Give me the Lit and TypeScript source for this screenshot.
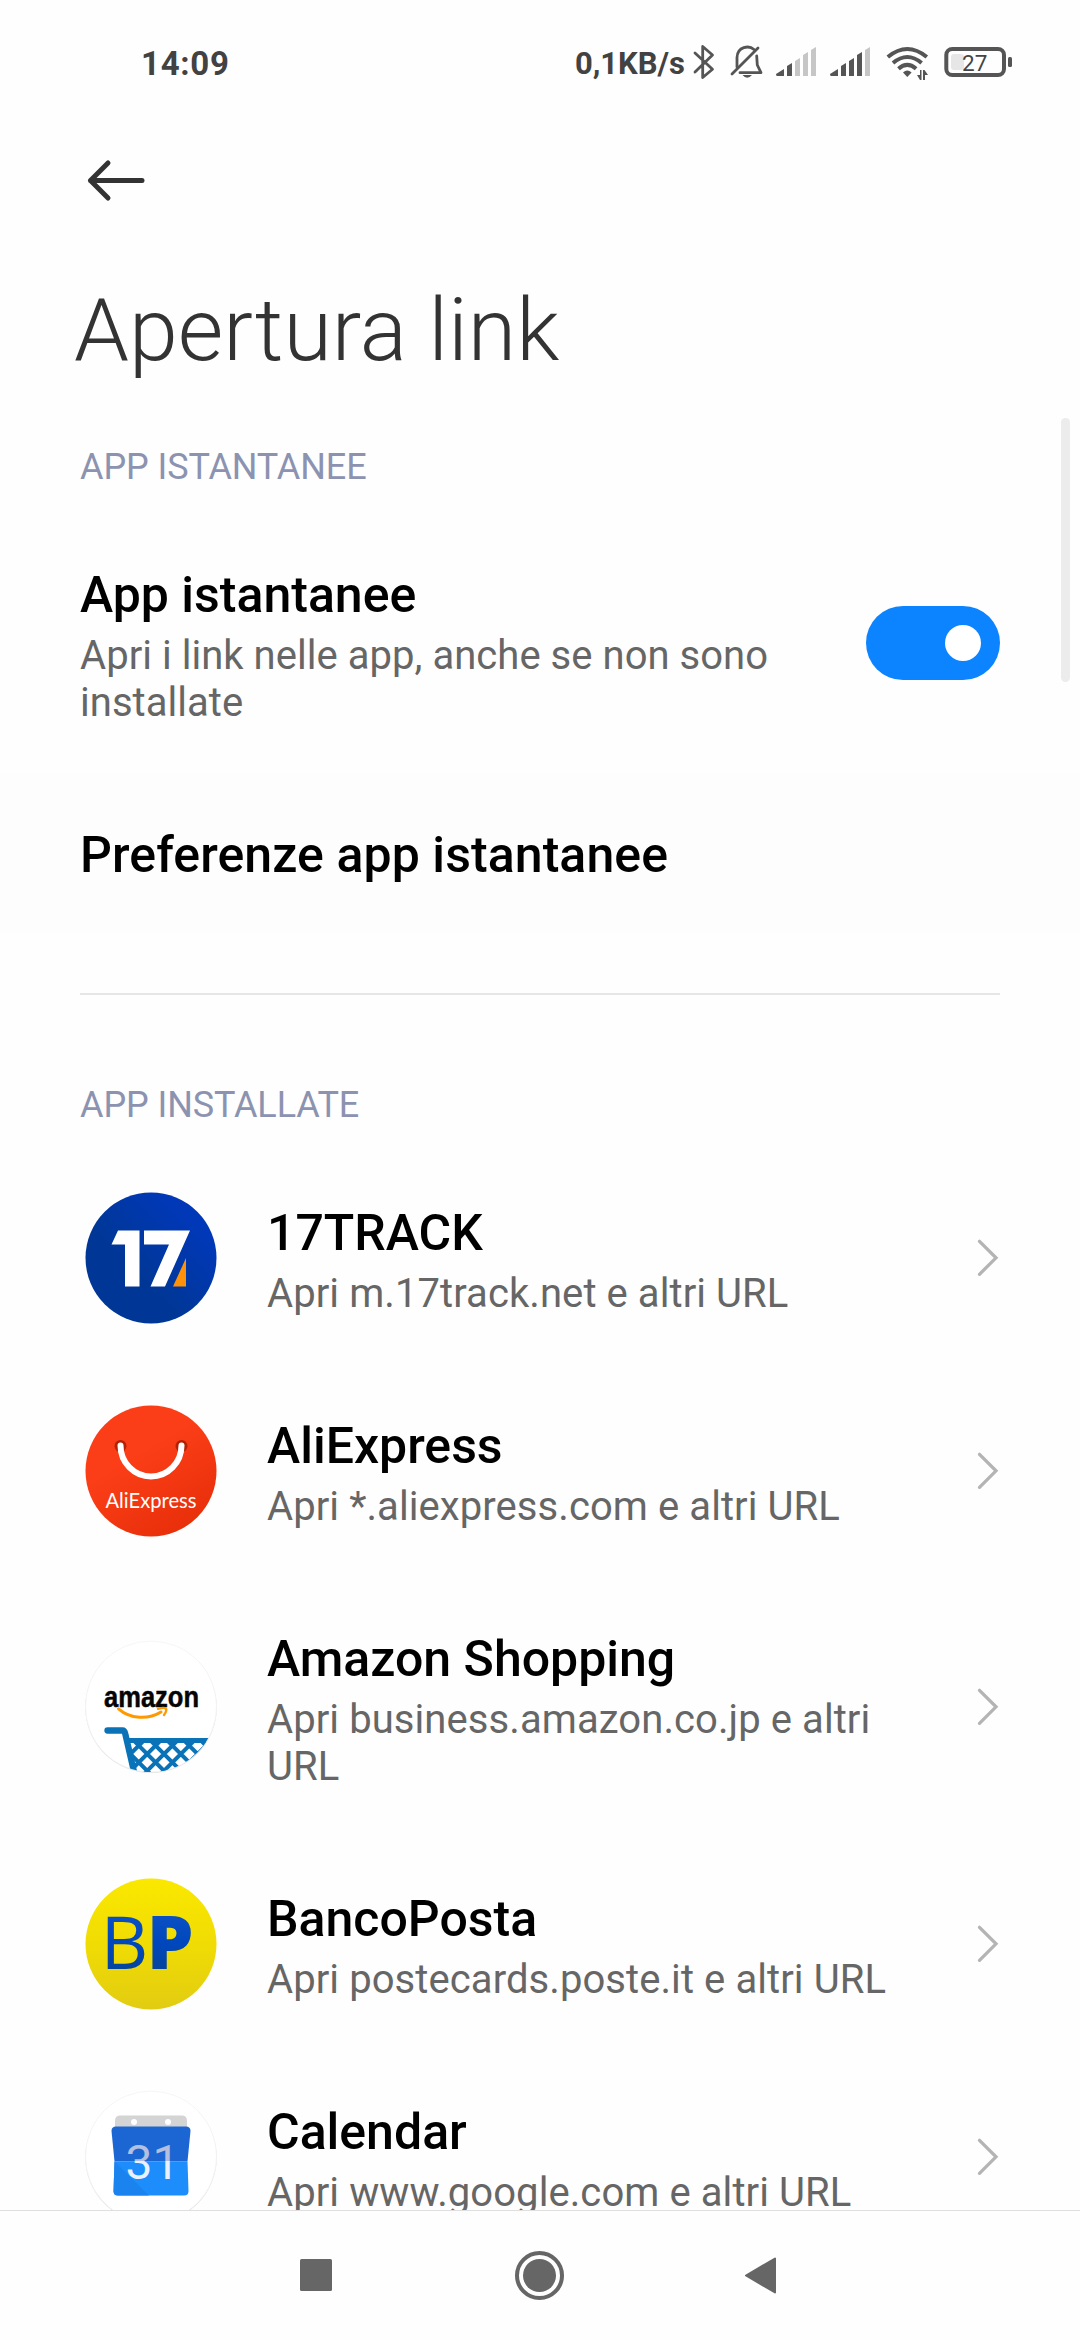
import { LitElement, html, svg, css } from "lit";
import { customElement } from "lit/decorators.js";

const bar = (x: number, top: number, on: boolean) =>
  svg`<path d="M${x} ${top + 3}L${x + 5} ${top}V29H${x}Z" fill=${on ? "#555" : "#c6c6c6"}></path>`;

const signal = (level: number) => html`<svg class="signal" width="41" height="30" viewBox="0 0 41 30">
  <path d="M1 29Q0 29 0 27L8 22V29Z" fill="#555"></path>
  ${[16, 11, 5, 0].map((top, i) => bar([11, 19, 27, 35][i], top, i + 2 <= level))}
</svg>`;

const chevron = html`<svg class="chevron" width="24" height="40" viewBox="0 0 24 40">
  <path d="M3.500 3.300L20 19.800L3.500 36.300" fill="none" stroke="#b4b4b4" stroke-width="3.300" stroke-linecap="round"></path>
</svg>`;

const icon17 = html`<svg class="icon" viewBox="0 0 132 132">
  <defs><linearGradient id="track-bg" x1=".2" y1=".8" x2=".8" y2=".2"><stop offset=".3" stop-color="#003796"></stop><stop offset="1" stop-color="#0038b8"></stop></linearGradient></defs>
  <circle cx="66" cy="66" r="65.5" fill="url(#track-bg)"></circle>
  <path d="M33 38.500H54.500V94.500H40V52.500H26.500Z" fill="#fff"></path>
  <path d="M59 38.500H105L80 94.500H65.500L84 52.500H59Z" fill="#fff"></path>
  <path d="M101 66V94.500H88Z" fill="#ff9208"></path>
</svg>`;

const iconAli = html`<svg class="icon" viewBox="0 0 132 132">
  <defs><linearGradient id="ali-bg" x1=".2" y1="0" x2=".8" y2="1"><stop offset=".35" stop-color="#fb3e17"></stop><stop offset="1" stop-color="#e62e09"></stop></linearGradient></defs>
  <circle cx="66" cy="66" r="65.500" fill="url(#ali-bg)"></circle>
  <circle cx="35.500" cy="41" r="6" fill="#b32205"></circle><circle cx="96.500" cy="41" r="6" fill="#b32205"></circle>
  <path d="M35.500 40.500A30.500 31 0 0 0 96.500 40.500" fill="none" stroke="#fff" stroke-width="6" stroke-linecap="round"></path>
  <text x="20.500" y="103" font-size="21" textLength="91" lengthAdjust="spacingAndGlyphs" fill="#fff" class="lato">AliExpress</text>
</svg>`;

const mesh = Array.from({ length: 14 }, (_, i) => {
  const down = -84.4 + 16.8 * i;
  const up = 141.6 + 16.8 * i;
  return svg`<path d="M${90 + down} 90L${140 + down} 140M${up - 90} 90L${up - 140} 140"></path>`;
});

const disc = svg`<circle cx="66" cy="66.300" r="65.800" fill="#e0e0e0"></circle>
  <circle cx="66" cy="65.600" r="65.500" fill="#fff" stroke="#f4f4f4" stroke-width="0.800"></circle>`;

const iconAmazon = html`<svg class="icon" viewBox="0 0 132 132">
  <defs>
    <clipPath id="amz-disc"><circle cx="66" cy="65.500" r="65.500"></circle></clipPath>
    <clipPath id="amz-basket"><path d="M43 98H132V132H51Z"></path></clipPath>
  </defs>
  ${disc}
  <text x="19" y="65.500" font-size="30" textLength="95" lengthAdjust="spacingAndGlyphs" class="wordmark" fill="#050505">amazon</text>
  <path d="M33.500 67.800C45 78 63 79 76 71" fill="none" stroke="#f90" stroke-width="3" stroke-linecap="round"></path>
  <path d="M73 67.800Q79 66 81 67.500Q82 70 79 74" fill="none" stroke="#f90" stroke-width="2.400" stroke-linecap="round"></path>
  <g clip-path="url(#amz-disc)" fill="none" stroke="#0a73b7">
    <g clip-path="url(#amz-basket)" stroke-width="4">${mesh}</g>
    <path d="M22.500 89.500H37.500Q39.500 89.500 40.300 93L50 135" stroke-width="6.300" stroke-linecap="round" stroke-linejoin="round"></path>
    <path d="M41 99.500H132" stroke-width="5"></path>
  </g>
</svg>`;

const iconBp = html`<svg class="icon" viewBox="0 0 132 132">
  <defs>
    <linearGradient id="bp-bg" x1="0" y1="0" x2="0" y2="1"><stop offset="0" stop-color="#fae800"></stop><stop offset=".5" stop-color="#f0dc04"></stop><stop offset="1" stop-color="#e2cc12"></stop></linearGradient>
    <linearGradient id="bp-ink" gradientUnits="userSpaceOnUse" x1="0" y1="38" x2="0" y2="92"><stop offset="0" stop-color="#0a50c4"></stop><stop offset=".5" stop-color="#0047bd"></stop><stop offset="1" stop-color="#05459c"></stop></linearGradient>
  </defs>
  <circle cx="66" cy="66" r="65.500" fill="url(#bp-bg)"></circle>
  <text x="15.400" y="91.200" font-size="74" class="thin" fill="url(#bp-ink)">B<tspan class="heavy" dx="-1.500">P</tspan></text>
</svg>`;

const iconCal = html`<svg class="icon" viewBox="0 0 132 132">
  <defs>
    <linearGradient id="cal-ink" gradientUnits="userSpaceOnUse" x1="0" y1="0" x2="0" y2="132"><stop offset=".532" stop-color="#b5bfe0"></stop><stop offset=".532" stop-color="#eaf1fc"></stop></linearGradient>
  </defs>
  ${disc}
  <path d="M30 38V30Q30 24.500 35 24.500H97Q102 24.500 102 30V38Z" fill="#d4d4d4"></path>
  <circle cx="49" cy="31" r="3" fill="#fff"></circle><circle cx="83" cy="31" r="3" fill="#fff"></circle>
  <path d="M29.500 70.200L26.500 40Q26.500 35.500 31 35.500H101Q105.500 35.500 105.500 40L102.500 70.200Z" fill="#1b66d2"></path>
  <path d="M29.500 70.200H102.500L103.500 100Q103.500 104.500 99 104.500H33Q28.500 104.500 28.500 100Z" fill="#1d8dfb"></path>
  <path d="M29.500 70.200L64 104.500H33Q28.500 104.500 28.500 100Z" fill="#1b83ee"></path>
  <text x="40.600" y="87.500" font-size="48" class="roboto" fill="url(#cal-ink)">31</text>
</svg>`;

const apps = [
  { icon: icon17, name: "17TRACK", url: "Apri m.17track.net e altri URL" },
  { icon: iconAli, name: "AliExpress", url: "Apri *.aliexpress.com e altri URL" },
  { icon: iconAmazon, name: "Amazon Shopping", url: "Apri business.amazon.co.jp e altri URL" },
  { icon: iconBp, name: "BancoPosta", url: "Apri postecards.poste.it e altri URL" },
  { icon: iconCal, name: "Calendar", url: "Apri www.google.com e altri URL" },
];

@customElement("app-root")
export class AppRoot extends LitElement {
  static styles = css`
    :host { display: flex; flex-direction: column; position: relative; width: 1080px; height: 2340px; overflow: hidden; background: #fefefe; font-family: Roboto, sans-serif; color: #000; box-sizing: border-box; }
    svg { display: block; flex: none; overflow: visible; }
    .status { flex: none; height: 124px; display: flex; align-items: center; padding: 0 68px 0 141px; color: #424242; font-weight: 700; box-sizing: border-box; }
    .time { font-size: 33px; line-height: 40px; letter-spacing: 0.7px; flex: 1; padding-top: 3px; }
    .speed { font-size: 31px; line-height: 40px; margin-right: 8px; padding-top: 3px; }
    .bell { margin-left: 16px; }
    .signal { margin-left: 13px; }
    .wifi { margin-left: 15px; }
    .battery { margin-left: 14px; }
    .back { flex: none; height: 154px; padding: 36px 0 0 86px; box-sizing: border-box; }
    h1 { flex: none; margin: 0; padding-left: 74px; height: 168px; font-size: 88px; line-height: 103px; font-weight: 300; color: #333; box-sizing: border-box; }
    .list { flex: 1; min-height: 0; overflow: hidden; padding: 0 80px; }
    h2 { margin: 0 0 25px; font-size: 36px; line-height: 42px; font-weight: 400; letter-spacing: -0.1px; color: #8c93b0; }
    .row { display: flex; align-items: center; }
    .icon { width: 132px; height: 132px; margin: 0 50.5px 0 4.5px; }
    .text { flex: 1; padding: 53px 0 47px; }
    .name { font-size: 50px; line-height: 58px; font-weight: 500; }
    .sub { margin-top: 8px; font-size: 40px; line-height: 47px; letter-spacing: 0.08px; color: #666; }
    .app .sub { max-width: 650px; }
    .instant .sub { max-width: 720px; letter-spacing: 0.04px; }
    .pref { margin: 0 -80px; padding: 0 80px; background: #fdfdfd; }
    .pref .text { padding-bottom: 49px; }
    .pref .name { letter-spacing: 0.08px; }
    .toggle { width: 134px; height: 74px; border-radius: 37px; background: #0d84ff; display: flex; align-items: center; justify-content: flex-end; padding-right: 19px; box-sizing: border-box; }
    .knob { width: 36px; height: 36px; border-radius: 50%; background: #fff; }
    .divider { height: 2px; margin: 60px 0 89px; background: #e6e6e6; }
    .scroll { position: absolute; left: 1061px; top: 418px; width: 9px; height: 264px; border-radius: 5px; background: #ececec; }
    .nav { flex: none; height: 130px; border-top: 1px solid #dfdfdf; box-sizing: border-box; display: flex; background: #fefefe; padding-left: 299px; }
    .lato { font-family: Lato, sans-serif; }
    .wordmark { font-family: "Liberation Sans", sans-serif; font-weight: 700; stroke: #050505; stroke-width: 0.5px; }
    .thin { font-family: "Open Sans", sans-serif; font-weight: 400; }
    .heavy { font-weight: 800; }
    .roboto { font-family: Roboto, sans-serif; font-weight: 400; }
    .pct { font-family: Roboto, sans-serif; font-weight: 400; font-size: 22.5px; }
  `;

  render() {
    return html`
      <div class="status">
        <span class="time">14:09</span>
        <span class="speed">0,1KB/s</span>
        <svg width="21" height="36" viewBox="0 0 21 36"><path d="M2 9L19.500 25.300L9.700 33.500V2.500L19.500 11L2 28" fill="none" stroke="#555" stroke-width="2.800" stroke-linejoin="round" stroke-linecap="round"></path></svg>
        <svg class="bell" width="33" height="32" viewBox="0 0 33 32"><g fill="none" stroke="#555" stroke-width="2.800" stroke-linecap="round" stroke-linejoin="round"><path d="M2 28L28 2"></path><path d="M7 21V11.500C7.500 0.500 19 -1 24 3.500M26.700 10L27.300 19L31 26.700H10"></path></g><path d="M12.500 29H22Q17.200 34.500 12.500 29Z" fill="#555"></path></svg>
        ${signal(2)}${signal(4)}
        <svg class="wifi" width="44" height="32" viewBox="0 0 44 32"><g fill="none" stroke="#555" stroke-width="4"><path d="M1.800 11Q21.300 -5 40.800 11"></path><path d="M7 17Q21.300 5 35.600 17"></path><path d="M12.500 22.800Q21.300 15 30.100 22.800"></path></g><path d="M17 26.500Q21.300 22.500 25.600 26.500L21.300 31Z" fill="#555"></path><path d="M35.500 24V34H34L31 29H34V24ZM37 34V24H38.500L42 29H39V34Z" fill="#555"></path></svg>
        <svg class="battery" width="68" height="32" viewBox="0 0 68 32"><rect x="2.300" y="3" width="57.700" height="26" rx="6" fill="none" stroke="#555" stroke-width="4"></rect><rect x="7" y="8" width="13" height="16" rx="3" fill="#e6e6e6"></rect><rect x="64" y="11" width="4" height="10" rx="1.500" fill="#555"></rect><text class="pct" x="18" y="24.500" fill="#444">27</text></svg>
      </div>
      <div class="back"><svg width="60" height="42" viewBox="0 0 60 42"><path d="M22 3L4.500 20.500L22 38M4.500 20.500H56" fill="none" stroke="#333" stroke-width="5" stroke-linecap="round" stroke-linejoin="round"></path></svg></div>
      <h1>Apertura link</h1>
      <div class="list">
        <h2>APP ISTANTANEE</h2>
        <div class="row instant">
          <div class="text"><div class="name">App istantanee</div><div class="sub">Apri i link nelle app, anche se non sono installate</div></div>
          <div class="toggle"><div class="knob"></div></div>
        </div>
        <div class="row pref"><div class="text"><div class="name">Preferenze app istantanee</div></div></div>
        <div class="divider"></div>
        <h2>APP INSTALLATE</h2>
        ${apps.map((a) => html`<div class="row app">${a.icon}<div class="text"><div class="name">${a.name}</div><div class="sub">${a.url}</div></div>${chevron}</div>`)}
      </div>
      <div class="scroll"></div>
      <div class="nav">
        <svg width="480" height="129" viewBox="0 0 480 129" fill="#666"><rect x="1" y="48" width="32" height="32" rx="1.500"></rect><circle cx="240.500" cy="64.500" r="22.500" fill="none" stroke="#666" stroke-width="4"></circle><circle cx="240.500" cy="64.500" r="16.500"></circle><path d="M447 64.500L476 47.500V81.500Z" stroke="#666" stroke-width="2" stroke-linejoin="round"></path></svg>
      </div>
    `;
  }
}
